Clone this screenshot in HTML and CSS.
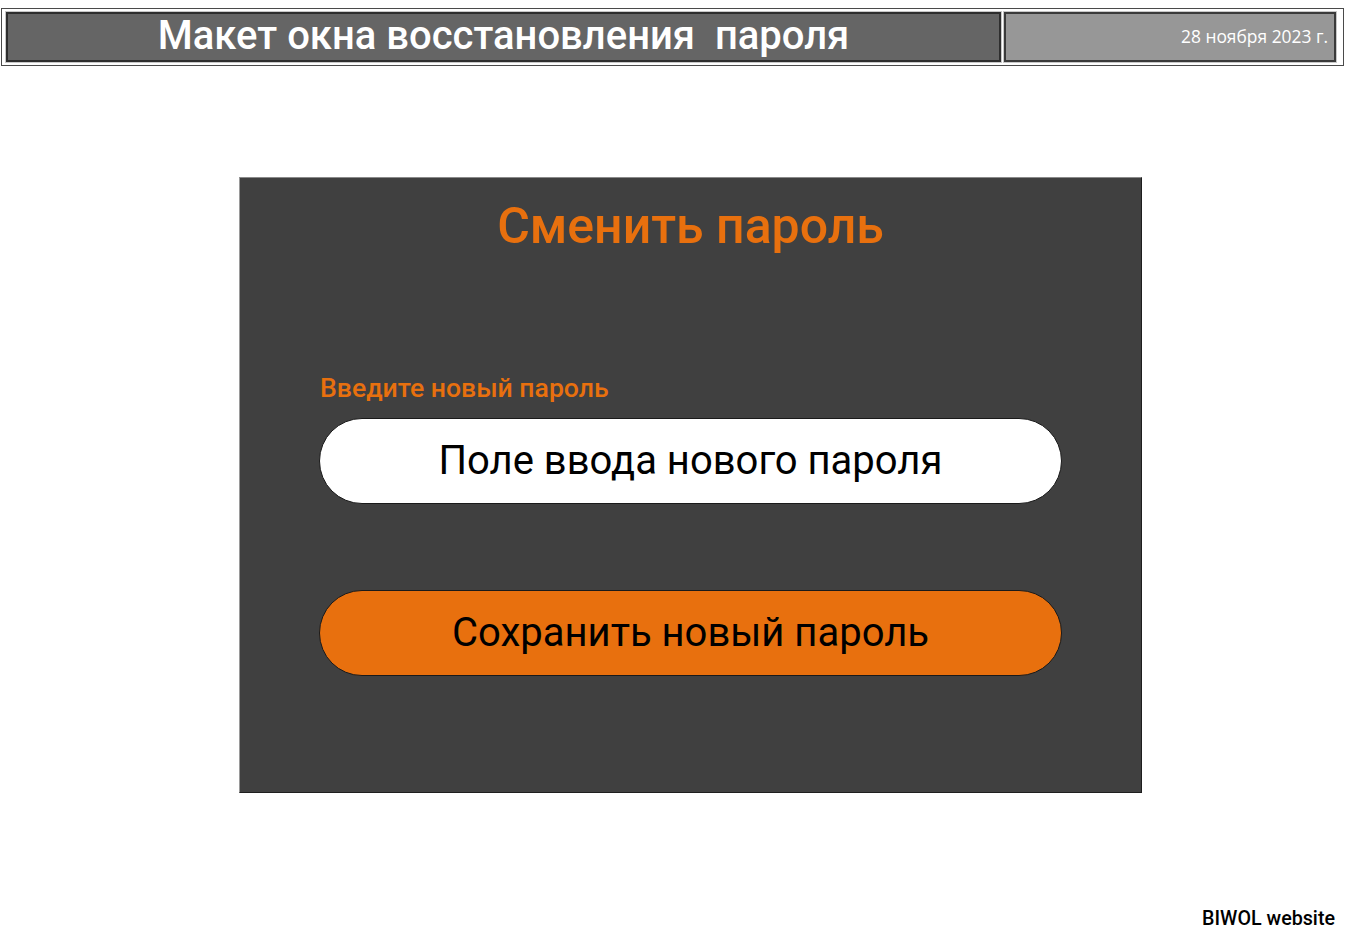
FILE: index.html
```html
<!DOCTYPE html>
<html lang="ru">
<head>
<meta charset="utf-8">
<title>Макет окна восстановления пароля</title>
<link rel="stylesheet" href="styles.css">
</head>
<body>
<header class="topbar">
  <div class="topbar-title">Макет окна восстановления&nbsp; пароля</div>
  <div class="topbar-date">28 ноября 2023 г.</div>
</header>
<main class="card">
  <h1 class="card-title">Сменить пароль</h1>
  <label class="field-label" for="pw">Введите новый пароль</label>
  <div class="field" id="pw">Поле ввода нового пароля</div>
  <div class="save-btn">Сохранить новый пароль</div>
</main>
<footer class="footer">BIWOL website</footer>
</body>
</html>
```
FILE: styles.css
```css
* { box-sizing: border-box; }
html, body { margin: 0; padding: 0; background: #fff; }
body {
  width: 1347px;
  height: 941px;
  position: relative;
  font-family: Roboto, "Noto Sans", sans-serif;
}
.topbar {
  margin: 8px 0 0 1px;
  width: 1343px;
  height: 58px;
  border: 1px solid #4a4a4a;
  padding: 3px 7px 3px 4px;
  display: flex;
  gap: 3px;
}
.topbar-title {
  width: 995px;
  height: 50px;
  background: #656565;
  border: 2px solid #2e2e2e;
  box-shadow: 0 0 0 1px #c8c8c8;
  color: #fff;
  font-weight: 500;
  font-size: 40px;
  line-height: 44px;
  text-align: center;
  white-space: pre;
}
.topbar-date {
  flex: 1;
  height: 50px;
  background: #979797;
  border: 2px solid #3a3a3a;
  box-shadow: 0 0 0 1px #c8c8c8;
  color: #fff;
  font-family: "Open Sans", "Noto Sans", sans-serif;
  font-size: 17.4px;
  line-height: 45px;
  text-align: right;
  padding-right: 6px;
}
.card {
  margin: 111px 0 0 239px;
  width: 903px;
  height: 616px;
  background: #404040;
  border: 1px solid #1e1e1e;
  border-left-color: #9a9a9a;
  border-top-color: #8a8a8a;
  padding: 0 79px;
  display: flex;
  flex-direction: column;
}
.card-title {
  margin: 18px 0 0;
  text-align: center;
  color: #e8700e;
  font-size: 50px;
  font-weight: 500;
  line-height: 60px;
}
.field-label {
  margin-top: 117px;
  padding-left: 1px;
  color: #e8700e;
  font-size: 26.6px;
  font-weight: 500;
  line-height: 30px;
}
.field {
  margin-top: 15px;
  height: 86px;
  background: #fff;
  border: 1px solid #1a1a1a;
  border-radius: 43px;
  color: #000;
  font-size: 40px;
  line-height: 84px;
  text-align: center;
}
.save-btn {
  margin-top: 86px;
  height: 86px;
  background: #e8700e;
  border: 1px solid #1a1a1a;
  border-radius: 43px;
  color: #000;
  font-size: 40px;
  line-height: 84px;
  text-align: center;
}
.footer {
  position: absolute;
  right: 12px;
  bottom: 11px;
  font-size: 19.7px;
  font-weight: 500;
  color: #000;
  line-height: 22px;
}
```
